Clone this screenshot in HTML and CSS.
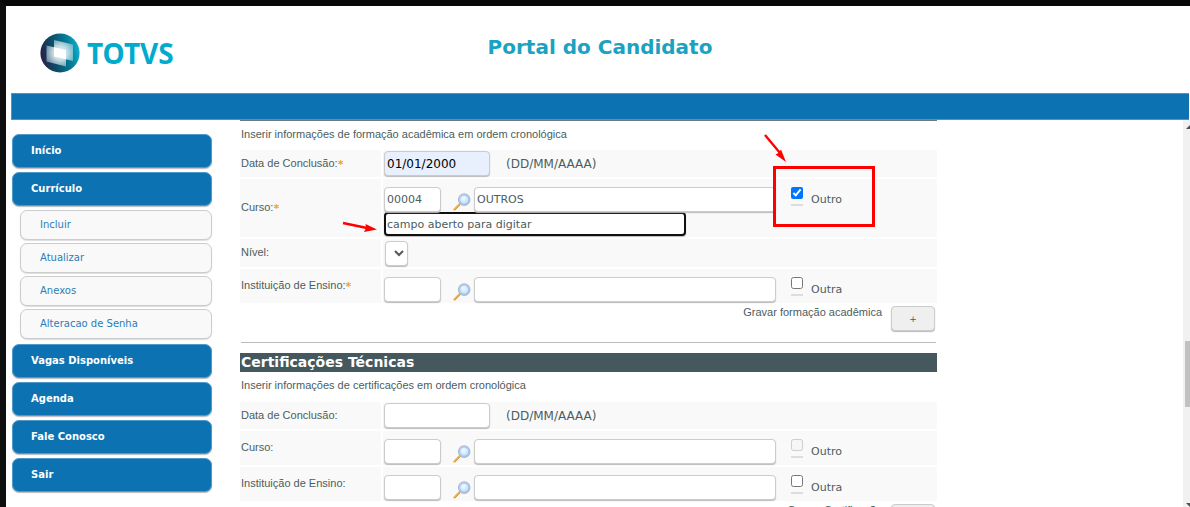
FILE: index.html
```html
<!DOCTYPE html>
<html lang="pt-BR">
<head>
<meta charset="utf-8">
<title>Portal do Candidato</title>
<link rel="stylesheet" href="styles.css">
</head>
<body>
<svg class="defs" aria-hidden="true">
  <defs>
    <radialGradient id="lens" cx="0.45" cy="0.4" r="0.6"><stop offset="0" stop-color="#f4faff"/><stop offset="1" stop-color="#b4d6f8"/></radialGradient>
    <symbol id="search" viewBox="0 0 18 18">
      <path d="M1.4 16.6 7 10.8" stroke="#e8b45a" stroke-width="2.2" stroke-linecap="round"/>
      <path d="M2 17 7.4 11.4" stroke="#a87a3a" stroke-width=".6"/>
      <circle cx="11.2" cy="6.6" r="5.7" fill="url(#lens)" stroke="#a9b9d3" stroke-width="1.2"/>
      <circle cx="11.2" cy="6.6" r="4.5" fill="none" stroke="#8fc0f2" stroke-width=".8"/>
    </symbol>
  </defs>
</svg>
<header class="top">
  <div class="logo">
    <svg width="40" height="40" viewBox="0 0 40 40" aria-hidden="true">
      <defs>
        <linearGradient id="ball" x1="0" y1=".6" x2="1" y2=".4"><stop offset="0" stop-color="#2b1f47"/><stop offset=".35" stop-color="#0b4d69"/><stop offset=".75" stop-color="#04819c"/><stop offset="1" stop-color="#10b2cc"/></linearGradient>
        <radialGradient id="glow"><stop offset="0" stop-color="#fff" stop-opacity=".95"/><stop offset=".5" stop-color="#fff" stop-opacity=".6"/><stop offset="1" stop-color="#fff" stop-opacity="0"/></radialGradient>
        <clipPath id="panels"><path d="M14 7 33 11.500V28L26 26.300V33.500L6.500 28.500V12.500L14 14.200Z"/></clipPath>
      </defs>
      <circle cx="20" cy="20" r="19.6" fill="url(#ball)"/>
      <path d="M14 7 33 11.500V28L14 23.500Z" fill="#b9dfec" fill-opacity=".5"/>
      <path d="M6.500 12.500 26 17V33.500L6.500 28.500Z" fill="#b9dfec" fill-opacity=".5"/>
      <circle cx="20" cy="20" r="15" fill="url(#glow)" clip-path="url(#panels)"/>
      <path d="M14 14.200 26 17V26.300L14 23.500Z" fill="#fff"/>
    </svg>
    <span>TOTVS</span>
  </div>
  <h1>Portal do Candidato</h1>
</header>
<div class="bar"></div>
<div class="body">
  <nav class="menu">
    <a href="#" class="item">Início</a>
    <a href="#" class="item">Currículo</a>
    <div class="sub">
      <a href="#">Incluir</a>
      <a href="#">Atualizar</a>
      <a href="#">Anexos</a>
      <a href="#">Alteracao de Senha</a>
    </div>
    <a href="#" class="item">Vagas Disponíveis</a>
    <a href="#" class="item">Agenda</a>
    <a href="#" class="item">Fale Conosco</a>
    <a href="#" class="item">Sair</a>
  </nav>
  <main class="form">
    <section class="first">
      <p class="intro">Inserir informações de formação acadêmica em ordem cronológica</p>
      <div class="row">
        <label class="name" for="d1">Data de Conclusão:<b>*</b></label>
        <div class="cell"><div class="line"><input id="d1" class="field date filled" value="01/01/2000"><span>(DD/MM/AAAA)</span></div></div>
      </div>
      <div class="row">
        <label class="name" for="c1">Curso:<b>*</b></label>
        <div class="cell tall pointed">
          <div class="line">
            <input id="c1" class="field code" value="00004">
            <button class="find" aria-label="Pesquisar curso"><svg><use href="#search"/></svg></button>
            <input class="field text" aria-label="Nome do curso" value="OUTROS">
            <label class="other marked"><span class="tick"><input type="checkbox" checked></span>Outro
              <svg class="arrow-down" viewBox="0 0 24 30" aria-hidden="true"><path d="M2 2 17 20" stroke="#f00" stroke-width="2.400"/><path d="M23 29 12.500 21.500 15.500 20 18 16.500Z" fill="#f00"/></svg>
            </label>
          </div>
          <input class="field typed" aria-label="Outro curso" value="campo aberto para digitar">
          <svg class="arrow-right" viewBox="0 0 36 12" aria-hidden="true"><path d="M1 2 25 7" stroke="#f00" stroke-width="2.600"/><path d="M35 8.500 22 11 24 7 23.500 3Z" fill="#f00"/></svg>
        </div>
      </div>
      <div class="row">
        <label class="name" for="n1">Nível:</label>
        <div class="cell"><div class="line"><select id="n1" class="level"><option></option></select></div></div>
      </div>
      <div class="row">
        <label class="name" for="i1">Instituição de Ensino:<b>*</b></label>
        <div class="cell tall">
          <div class="line">
            <input id="i1" class="field code">
            <button class="find" aria-label="Pesquisar instituição"><svg><use href="#search"/></svg></button>
            <input class="field text" aria-label="Nome da instituição">
            <label class="other"><span class="tick"><input type="checkbox"></span>Outra</label>
          </div>
        </div>
      </div>
      <div class="save"><label for="s1">Gravar formação acadêmica</label><button id="s1">+</button></div>
    </section>
    <hr>
    <section>
      <h2>Certificações Técnicas</h2>
      <p class="intro">Inserir informações de certificações em ordem cronológica</p>
      <div class="row">
        <label class="name" for="d2">Data de Conclusão:</label>
        <div class="cell"><div class="line"><input id="d2" class="field date"><span>(DD/MM/AAAA)</span></div></div>
      </div>
      <div class="row">
        <label class="name" for="c2">Curso:</label>
        <div class="cell tall">
          <div class="line">
            <input id="c2" class="field code">
            <button class="find" aria-label="Pesquisar curso"><svg><use href="#search"/></svg></button>
            <input class="field text" aria-label="Nome do curso">
            <label class="other"><span class="tick"><input type="checkbox" disabled></span>Outro</label>
          </div>
        </div>
      </div>
      <div class="row">
        <label class="name" for="i2">Instituição de Ensino:</label>
        <div class="cell tall">
          <div class="line">
            <input id="i2" class="field code">
            <button class="find" aria-label="Pesquisar instituição"><svg><use href="#search"/></svg></button>
            <input class="field text" aria-label="Nome da instituição">
            <label class="other"><span class="tick"><input type="checkbox"></span>Outra</label>
          </div>
        </div>
      </div>
      <div class="save"><label for="s2">Gravar Certificação</label><button id="s2">+</button></div>
    </section>
  </main>
  <div class="scroll" aria-hidden="true">
    <svg viewBox="0 0 7 5"><path d="M3 4 7 0V4Z" fill="#505050"/></svg>
    <div class="thumb"></div>
    <svg viewBox="0 0 7 5"><path d="M3 1 7 5V1Z" fill="#505050"/></svg>
  </div>
</div>
</body>
</html>
```
FILE: styles.css
```css
*, *::before { box-sizing: border-box; }
body {
  margin: 0;
  height: 100vh;
  overflow: hidden;
  display: flex;
  flex-direction: column;
  border-top: 6px solid #080808;
  border-left: 6px solid #0e0e0e;
  background: #fff;
  color: #4b5d60;
  font: 11px/14px "DejaVu Sans", sans-serif;
}
.defs { position: absolute; width: 0; height: 0; }
.top {
  display: grid;
  grid-template-columns: 1fr auto 1fr;
  align-items: center;
  padding: 27px 0 19px 34px;
}
.logo {
  display: flex;
  align-items: center;
  gap: 7px;
  color: #00abcd;
  font: bold 28px/40px "Noto Sans", sans-serif;
}
h1 {
  margin: 0 0 12px;
  padding-right: 30px;
  color: #1ba2c2;
  font: bold 20px/28px "DejaVu Sans", sans-serif;
  white-space: nowrap;
}
.bar {
  flex: none;
  height: 27px;
  margin: 1px 1px 0 5px;
  border: 1px solid #4a96c6;
  border-right: 0;
  background: #0c72b1;
}
.body {
  flex: 1;
  min-height: 0;
  display: flex;
}
.menu {
  flex: none;
  width: 206px;
  padding: 14px 0 0 6px;
  display: flex;
  flex-direction: column;
  gap: 4px;
}
.menu a { text-decoration: none; }
.item {
  height: 34px;
  padding-left: 18px;
  border: 1px solid #4f9acb;
  border-radius: 7px;
  background: #0c72b1;
  box-shadow: 0 1px 1px #bbb;
  color: #fff;
  font-size: 10px;
  font-weight: bold;
  line-height: 31px;
}
.sub {
  display: flex;
  flex-direction: column;
  gap: 3px;
  padding-left: 8px;
  margin-bottom: 1px;
}
.sub a {
  height: 30px;
  padding-left: 19px;
  border: 1px solid #ccc;
  border-radius: 7px;
  background: #f9f9f9;
  box-shadow: 0 1px 1px #ddd;
  color: #2a7db8;
  font-size: 10px;
  line-height: 27px;
}
.form {
  flex: 0 1 697px;
  margin-left: 28px;
}
.first { border-top: 1px solid #6c7b80; }
.intro {
  margin: 0;
  padding: 6px 1px 9px;
  font: 11px/14px "Liberation Sans", sans-serif;
}
h2 + .intro { padding-bottom: 10px; }
.row {
  display: grid;
  grid-template-columns: 141px 1fr;
  gap: 2px;
  margin-bottom: 2px;
}
.name, .cell { background: #f9f9f9; }
.name {
  display: flex;
  align-items: center;
  padding: 0 1px 2px;
  font: 11px/14px "Liberation Sans", sans-serif;
}
.name b {
  padding-top: 3px;
  color: #f0a030;
  font: bold 11px/11px "DejaVu Sans", sans-serif;
}
.cell { padding: 1px; }
.tall { padding-top: 8px; }
.pointed { position: relative; }
.line { display: flex; }
.line > span { padding: 6px 16px 0; font-size: 12px; }
.field {
  height: 25px;
  min-width: 0;
  padding: 0 2px;
  border: 1px solid #ccc;
  border-radius: 4px;
  background: #fff;
  box-shadow: 0 1px 1px #bbb;
  color: #4b5d60;
  font: 11px/14px "DejaVu Sans", sans-serif;
}
.date { width: 106px; font-size: 12px; }
.filled { background: #e8f0fe; color: #000; }
.code { width: 57px; }
.text { width: 302px; }
.typed {
  display: block;
  width: 302px;
  height: 24px;
  padding: 0 1px;
  border: 2px solid #101010;
}
.find {
  width: 33px;
  height: 25px;
  padding: 5px 3px 0 12px;
  border: 0;
  background: none;
}
.find svg { display: block; width: 18px; height: 18px; }
.other {
  display: flex;
  gap: 8px;
  margin-left: 15px;
  line-height: 25px;
}
.tick {
  height: 19px;
  border-bottom: 2px solid #ddd;
}
.tick input { display: block; width: 12px; height: 12px; margin: 0; }
.marked { position: relative; }
.marked::before {
  content: "";
  position: absolute;
  left: -18px;
  top: -21px;
  width: 102px;
  height: 61px;
  border: 3px solid #f00;
}
.arrow-down { position: absolute; left: -28px; top: -54px; width: 24px; height: 30px; }
.arrow-right { position: absolute; left: -41px; top: 42px; width: 36px; height: 12px; }
.level {
  width: 23px;
  height: 25px;
  margin: 1px 0 0 1px;
  border: 1px solid #ccc;
  border-radius: 4px;
  background-color: #fff;
  box-shadow: 0 1px 1px #bbb;
  color: #555;
}
.save {
  display: flex;
  justify-content: flex-end;
  gap: 9px;
  padding-right: 2px;
  font: 11px/14px "Liberation Sans", sans-serif;
}
.save button {
  width: 44px;
  height: 25px;
  margin-top: 1px;
  border: 1px solid #ccc;
  border-radius: 4px;
  background: #efefef;
  box-shadow: 0 1px 1px #bbb;
  color: #4b5d60;
  font: 9px/14px "DejaVu Sans", sans-serif;
}
hr {
  margin: 11px 1px 10px;
  border: 0;
  border-top: 1px solid #bbb;
}
h2 {
  margin: 0;
  padding-left: 1px;
  background: #44585d;
  color: #fff;
  font: bold 14px/19px "DejaVu Sans", sans-serif;
}
.scroll {
  width: 7px;
  margin-left: auto;
  display: flex;
  flex-direction: column;
  background: #f1f1f1;
}
.scroll svg { width: 7px; height: 5px; margin: 5px 0 0; }
.thumb {
  height: 66px;
  margin: 211px 0 auto 2px;
  background: #c1c1c1;
}
```
